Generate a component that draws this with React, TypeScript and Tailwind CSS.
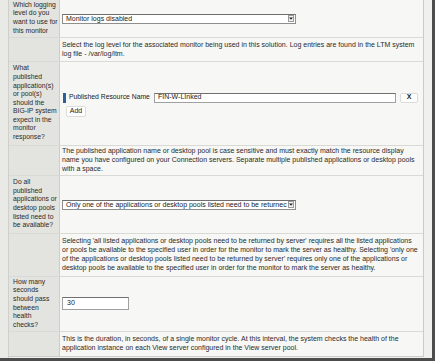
import React from "react";

const F = "font-['Liberation_Sans',Arial,sans-serif]";

function Label({ lines }: { lines: string[] }) {
  return (
    <div className="w-[51px] shrink-0 bg-[#e3e3df] border-r border-[#cdcdc9] flex items-center pl-[4px] text-[6.8px] leading-[8.6px] text-[#2a2a2a]">
      <div className="-mt-[1px]">
        {lines.map((l, i) => (
          <div key={i} className="whitespace-nowrap">{l}</div>
        ))}
      </div>
    </div>
  );
}

function Desc({ lines }: { lines: string[] }) {
  return (
    <div className="text-[7px] leading-[8.8px] text-[#2a2a2a]">
      {lines.map((l, i) => (
        <div key={i} className="whitespace-nowrap">{l}</div>
      ))}
    </div>
  );
}

function Row({ h, label, children }: { h: string; label?: string[]; children: React.ReactNode }) {
  return (
    <div className={`flex border-b border-[#d9d9d5] ${h}`}>
      {label ? <Label lines={label} /> : <div className="w-[51px] shrink-0 bg-[#e3e3df] border-r border-[#cdcdc9]" />}
      <div className="flex-1 bg-[#f7f7f5] flex items-center pl-[2px]">{children}</div>
    </div>
  );
}

function Select({ text, w }: { text: string; w: string }) {
  return (
    <div className={`${w} h-[10px] bg-white border border-[#8e8e8e] border-t-[#6e6e6e] flex items-center`}>
      <div className="flex-1 overflow-hidden whitespace-nowrap pl-[3px] text-[7px] leading-[8px] text-[#222]">{text}</div>
      <div className="w-[6px] h-[7px] mr-[1px] border border-[#9a9a9a] bg-[#f4f4f4] flex items-center justify-center">
        <svg width="4" height="3" viewBox="0 0 4 3"><path d="M0 0.5 L4 0.5 L2 2.8 Z" fill="#222" /></svg>
      </div>
    </div>
  );
}

export default function App() {
  return (
    <div className={`w-[437px] h-[362px] bg-white overflow-hidden ${F}`}>
      <div className="w-[435px] h-[361px] bg-[#f0f0ee] border-r-[3px] border-b-[3px] border-[#4d4d4d] flex">
        <div className="w-[9px] shrink-0 bg-[#e9e9e6] border-r border-[#cfcfcb]" />
        <div className="w-[415px] shrink-0 h-[357px] border-r border-b border-[#cbcbc7] flex flex-col">
          <Row h="h-[38px]" label={["Which logging", "level do you", "want to use for", "this monitor"]}>
            <Select text="Monitor logs disabled" w="w-[234px]" />
          </Row>
          <Row h="h-[24px]">
            <Desc
              lines={[
                "Select the log level for the associated monitor being used in this solution. Log entries are found in the LTM system",
                "log file - /var/log/ltm.",
              ]}
            />
          </Row>
          <Row
            h="h-[84px]"
            label={["What", "published", "application(s)", "or pool(s)", "should the", "BIG-IP system", "expect in the", "monitor", "response?"]}
          >
            <div className="flex flex-col pt-[2px]">
              <div className="flex items-center h-[11px]">
                <div className="w-[3px] h-[10px] bg-[#2d5f9a] ml-[1px]" />
                <div className="ml-[3px] text-[6.8px] text-[#222] whitespace-nowrap w-[85px]">Published Resource Name</div>
                <div className="w-[242px] h-[10px] bg-white border border-[#a0a0a0] border-t-[#707070] flex items-center pl-[3px] text-[7px] text-[#222]">
                  FIN-W-LInked
                </div>
                <div className="ml-[4px] w-[18px] h-[10px] bg-white border border-[#dcdcd8] rounded-[2px] flex items-center justify-center text-[7px] font-bold text-[#222]">
                  X
                </div>
              </div>
              <div className="mt-[3px] ml-[4px] w-[20px] h-[11px] bg-white border border-[#dcdcd8] rounded-[2px] flex items-center justify-center text-[7px] text-[#222]">
                Add
              </div>
            </div>
          </Row>
          <Row h="h-[30px]">
            <Desc
              lines={[
                "The published application name or desktop pool is case sensitive and must exactly match the resource display",
                "name you have configured on your Connection servers. Separate multiple published applications or desktop pools",
                "with a space.",
              ]}
            />
          </Row>
          <Row
            h="h-[58px]"
            label={["Do all", "published", "applications or", "desktop pools", "listed need to", "be available?"]}
          >
            <Select text="Only one of the applications or desktop pools listed need to be returnec" w="w-[234px]" />
          </Row>
          <Row h="h-[43px]">
            <Desc
              lines={[
                "Selecting 'all listed applications or desktop pools need to be returned by server' requires all the listed applications",
                "or pools be available to the specified user in order for the monitor to mark the server as healthy. Selecting 'only one",
                "of the applications or desktop pools listed need to be returned by server' requires only one of the applications or",
                "desktop pools be available to the specified user in order for the monitor to mark the server as healthy.",
              ]}
            />
          </Row>
          <Row h="h-[55px]" label={["How many", "seconds", "should pass", "between", "health", "checks?"]}>
            <div className="w-[67px] h-[13px] bg-white border border-[#a0a0a0] border-t-[#707070] flex items-center pl-[4px] text-[7px] text-[#222] mt-[-2px]">
              30
            </div>
          </Row>
          <div className="flex h-[24px]">
            <div className="w-[51px] shrink-0 bg-[#e3e3df] border-r border-[#cdcdc9]" />
            <div className="flex-1 bg-[#f7f7f5] flex items-center pl-[2px]">
              <Desc
                lines={[
                  "This is the duration, in seconds, of a single monitor cycle. At this interval, the system checks the health of the",
                  "application instance on each View server configured in the View server pool.",
                ]}
              />
            </div>
          </div>
        </div>
        <div className="flex-1" />
      </div>
    </div>
  );
}
